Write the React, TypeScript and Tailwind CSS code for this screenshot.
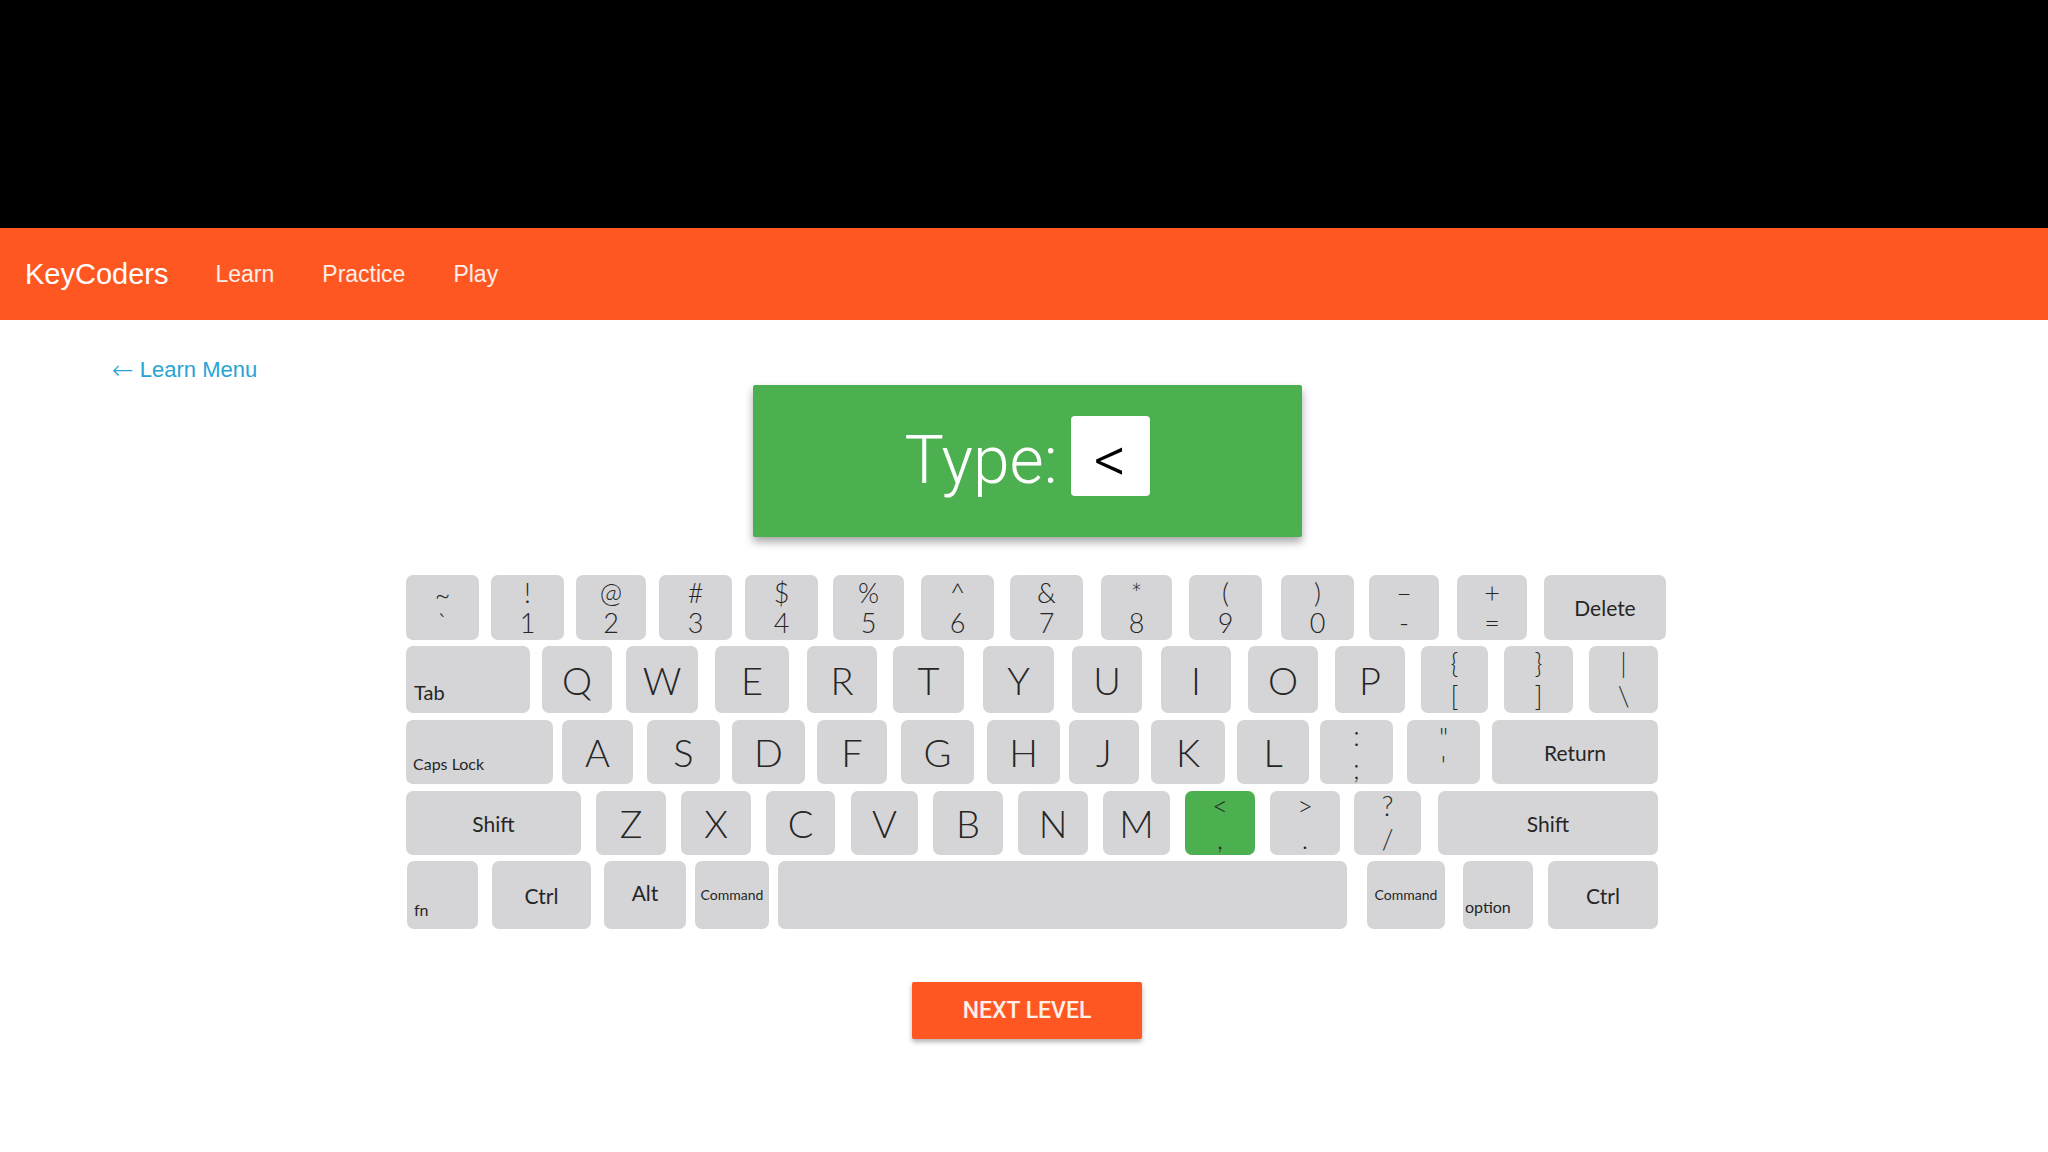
import React from "react";

type K = {
  t?: string;
  b?: string;
  label?: string;
  kind: "letter" | "dual" | "center" | "left" | "space";
  w: string;
  ml?: string;
  size?: string;
  pad?: string;
  active?: boolean;
};

type Row = { h: string; mt: string; dualPad: string; keys: K[] };

const rows: Row[] = [
  {
    h: "h-[65px]",
    mt: "",
    dualPad: "pt-[4px] pb-[3px]",
    keys: [
      { kind: "dual", t: "~", b: "`", w: "w-[73px]", pad: "pt-[6px] pb-[3px]" },
      { kind: "dual", t: "!", b: "1", w: "w-[73px]", ml: "ml-[12px]" },
      { kind: "dual", t: "@", b: "2", w: "w-[70px]", ml: "ml-[12px]" },
      { kind: "dual", t: "#", b: "3", w: "w-[73px]", ml: "ml-[13px]" },
      { kind: "dual", t: "$", b: "4", w: "w-[73px]", ml: "ml-[13px]" },
      { kind: "dual", t: "%", b: "5", w: "w-[71px]", ml: "ml-[15px]" },
      { kind: "dual", t: "^", b: "6", w: "w-[73px]", ml: "ml-[17px]" },
      { kind: "dual", t: "&", b: "7", w: "w-[73px]", ml: "ml-[16px]" },
      { kind: "dual", t: "*", b: "8", w: "w-[71px]", ml: "ml-[18px]" },
      { kind: "dual", t: "(", b: "9", w: "w-[73px]", ml: "ml-[17px]" },
      { kind: "dual", t: ")", b: "0", w: "w-[73px]", ml: "ml-[19px]" },
      { kind: "dual", t: "–", b: "-", w: "w-[70px]", ml: "ml-[15px]" },
      { kind: "dual", t: "+", b: "=", w: "w-[70px]", ml: "ml-[18px]" },
      { kind: "center", label: "Delete", w: "w-[122px]", ml: "ml-[17px]", size: "text-[21px]" },
    ],
  },
  {
    h: "h-[67px]",
    mt: "mt-[6px]",
    dualPad: "pt-[3px] pb-[3px]",
    keys: [
      { kind: "left", label: "Tab", w: "w-[124px]", size: "text-[20px]", pad: "pl-[8px] pb-[11px]" },
      { kind: "letter", label: "Q", w: "w-[70px]", ml: "ml-[12px]" },
      { kind: "letter", label: "W", w: "w-[72px]", ml: "ml-[14px]" },
      { kind: "letter", label: "E", w: "w-[74px]", ml: "ml-[17px]" },
      { kind: "letter", label: "R", w: "w-[70px]", ml: "ml-[18px]" },
      { kind: "letter", label: "T", w: "w-[71px]", ml: "ml-[16px]" },
      { kind: "letter", label: "Y", w: "w-[71px]", ml: "ml-[19px]" },
      { kind: "letter", label: "U", w: "w-[70px]", ml: "ml-[18px]" },
      { kind: "letter", label: "I", w: "w-[70px]", ml: "ml-[19px]" },
      { kind: "letter", label: "O", w: "w-[70px]", ml: "ml-[17px]" },
      { kind: "letter", label: "P", w: "w-[70px]", ml: "ml-[17px]" },
      { kind: "dual", t: "{", b: "[", w: "w-[67px]", ml: "ml-[16px]" },
      { kind: "dual", t: "}", b: "]", w: "w-[69px]", ml: "ml-[16px]" },
      { kind: "dual", t: "|", b: "\\", w: "w-[69px]", ml: "ml-[16px]" },
    ],
  },
  {
    h: "h-[64px]",
    mt: "mt-[7px]",
    dualPad: "pt-[2px] pb-[1px]",
    keys: [
      { kind: "left", label: "Caps Lock", w: "w-[147px]", size: "text-[16px]", pad: "pl-[7px] pb-[12px]" },
      { kind: "letter", label: "A", w: "w-[71px]", ml: "ml-[9px]" },
      { kind: "letter", label: "S", w: "w-[73px]", ml: "ml-[14px]" },
      { kind: "letter", label: "D", w: "w-[73px]", ml: "ml-[12px]" },
      { kind: "letter", label: "F", w: "w-[70px]", ml: "ml-[12px]" },
      { kind: "letter", label: "G", w: "w-[73px]", ml: "ml-[14px]" },
      { kind: "letter", label: "H", w: "w-[73px]", ml: "ml-[13px]" },
      { kind: "letter", label: "J", w: "w-[70px]", ml: "ml-[9px]" },
      { kind: "letter", label: "K", w: "w-[74px]", ml: "ml-[12px]" },
      { kind: "letter", label: "L", w: "w-[72px]", ml: "ml-[12px]" },
      { kind: "dual", t: ":", b: ";", w: "w-[73px]", ml: "ml-[11px]" },
      { kind: "dual", t: "\"", b: "'", w: "w-[73px]", ml: "ml-[14px]", pad: "pt-[4px] pb-[4px]" },
      { kind: "center", label: "Return", w: "w-[166px]", ml: "ml-[12px]", size: "text-[21px]" },
    ],
  },
  {
    h: "h-[64px]",
    mt: "mt-[7px]",
    dualPad: "pt-[1px] pb-[2px]",
    keys: [
      { kind: "center", label: "Shift", w: "w-[175px]", size: "text-[21px]" },
      { kind: "letter", label: "Z", w: "w-[70px]", ml: "ml-[15px]" },
      { kind: "letter", label: "X", w: "w-[70px]", ml: "ml-[15px]" },
      { kind: "letter", label: "C", w: "w-[69px]", ml: "ml-[15px]" },
      { kind: "letter", label: "V", w: "w-[67px]", ml: "ml-[16px]" },
      { kind: "letter", label: "B", w: "w-[70px]", ml: "ml-[15px]" },
      { kind: "letter", label: "N", w: "w-[70px]", ml: "ml-[15px]" },
      { kind: "letter", label: "M", w: "w-[67px]", ml: "ml-[15px]" },
      { kind: "dual", t: "<", b: ",", w: "w-[70px]", ml: "ml-[15px]", active: true },
      { kind: "dual", t: ">", b: ".", w: "w-[70px]", ml: "ml-[15px]" },
      { kind: "dual", t: "?", b: "/", w: "w-[67px]", ml: "ml-[14px]" },
      { kind: "center", label: "Shift", w: "w-[220px]", ml: "ml-[17px]", size: "text-[21px]" },
    ],
  },
  {
    h: "h-[68px]",
    mt: "mt-[6px]",
    dualPad: "",
    keys: [
      { kind: "left", label: "fn", w: "w-[71px]", ml: "ml-[1px]", size: "text-[16px]", pad: "pl-[7px] pb-[11px]" },
      { kind: "center", label: "Ctrl", w: "w-[99px]", ml: "ml-[14px]", size: "text-[21px]" },
      { kind: "center", label: "Alt", w: "w-[82px]", ml: "ml-[13px]", size: "text-[21px]", pad: "pb-[6px]" },
      { kind: "center", label: "Command", w: "w-[74px]", ml: "ml-[9px]", size: "text-[14px]" },
      { kind: "space", w: "w-[569px]", ml: "ml-[9px]" },
      { kind: "center", label: "Command", w: "w-[78px]", ml: "ml-[20px]", size: "text-[14px]" },
      { kind: "left", label: "option", w: "w-[70px]", ml: "ml-[18px]", size: "text-[16px]", pad: "pl-[2px] pb-[14px]" },
      { kind: "center", label: "Ctrl", w: "w-[110px]", ml: "ml-[15px]", size: "text-[21px]" },
    ],
  },
];

const keyFont = { fontFamily: "Lato, 'Noto Sans', sans-serif" };

function Key({ k, row }: { k: K; row: Row }) {
  const bg = k.active ? "bg-[#4caf50]" : "bg-[#d5d5d7]";
  const base = `shrink-0 ${k.w} ${k.ml ?? ""} h-full rounded-[7px] ${bg} text-[#262626] overflow-hidden flex`;
  if (k.kind === "letter") {
    return (
      <div className={`${base} items-center justify-center text-[38px] font-light leading-none`}>
        <span>{k.label}</span>
      </div>
    );
  }
  if (k.kind === "dual") {
    return (
      <div className={`${base} flex-col items-center justify-between text-[27px] font-light leading-[28px] ${k.pad ?? row.dualPad}`}>
        <span>{k.t}</span>
        <span>{k.b}</span>
      </div>
    );
  }
  if (k.kind === "center") {
    return (
      <div className={`${base} items-center justify-center ${k.size ?? ""} leading-none ${k.pad ?? ""}`}>
        <span>{k.label}</span>
      </div>
    );
  }
  if (k.kind === "left") {
    return (
      <div className={`${base} items-end justify-start ${k.size ?? ""} leading-none ${k.pad ?? ""}`}>
        <span>{k.label}</span>
      </div>
    );
  }
  return <div className={base} />;
}

export default function App() {
  return (
    <div className="min-h-screen bg-white" style={{ fontFamily: "'Liberation Sans', Arial, sans-serif" }}>
      <div className="h-[228px] bg-black" />
      <nav className="h-[92px] bg-[#ff5722] flex items-center pl-[25px]">
        <span className="text-[29px] text-white leading-none">KeyCoders</span>
        <span className="ml-[47px] text-[23px] text-white/90 leading-none">Learn</span>
        <span className="ml-[48px] text-[23px] text-white/90 leading-none">Practice</span>
        <span className="ml-[48px] text-[23px] text-white/90 leading-none">Play</span>
      </nav>

      <div className="pl-[112px] mt-[38px] h-[24px] flex items-center text-[22px] text-[#28a4d4]">
        <span className="text-[26px] leading-none mr-[6px]" style={{ fontFamily: "'DejaVu Sans', sans-serif", fontWeight: 300 }}>
          ←
        </span>
        <span className="leading-none">Learn Menu</span>
      </div>

      <main className="flex flex-col items-center pl-[6px]">
        <div className="mt-[3px] w-[549px] h-[152px] bg-[#4caf50] rounded-[2px] shadow-[0_5px_9px_rgba(0,0,0,0.35)] flex items-center justify-center gap-[13px]">
          <span
            className="text-[66px] text-white font-light leading-none"
            style={{ fontFamily: "Roboto, 'Liberation Sans', sans-serif" }}
          >
            Type:
          </span>
          <div
            className="w-[79px] h-[80px] -mt-[10px] bg-white rounded-[4px] flex items-center justify-center pt-[10px] text-[64px] font-light leading-none text-black"
            style={{ fontFamily: "Roboto, 'Liberation Sans', sans-serif" }}
          >
            &lt;
          </div>
        </div>

        <div className="mt-[38px] ml-[18px] w-[1260px] flex flex-col" style={keyFont}>
          {rows.map((row, i) => (
            <div key={i} className={`flex ${row.h} ${row.mt}`}>
              {row.keys.map((k, j) => (
                <Key key={j} k={k} row={row} />
              ))}
            </div>
          ))}
        </div>

        <button
          className="mt-[53px] w-[230px] h-[57px] bg-[#ff5722] rounded-[2px] shadow-[0_3px_5px_rgba(0,0,0,0.3)] text-[23px] font-medium text-[#fff1ea] leading-none"
          style={{ fontFamily: "Roboto, 'Liberation Sans', sans-serif" }}
        >
          NEXT LEVEL
        </button>
      </main>
    </div>
  );
}
